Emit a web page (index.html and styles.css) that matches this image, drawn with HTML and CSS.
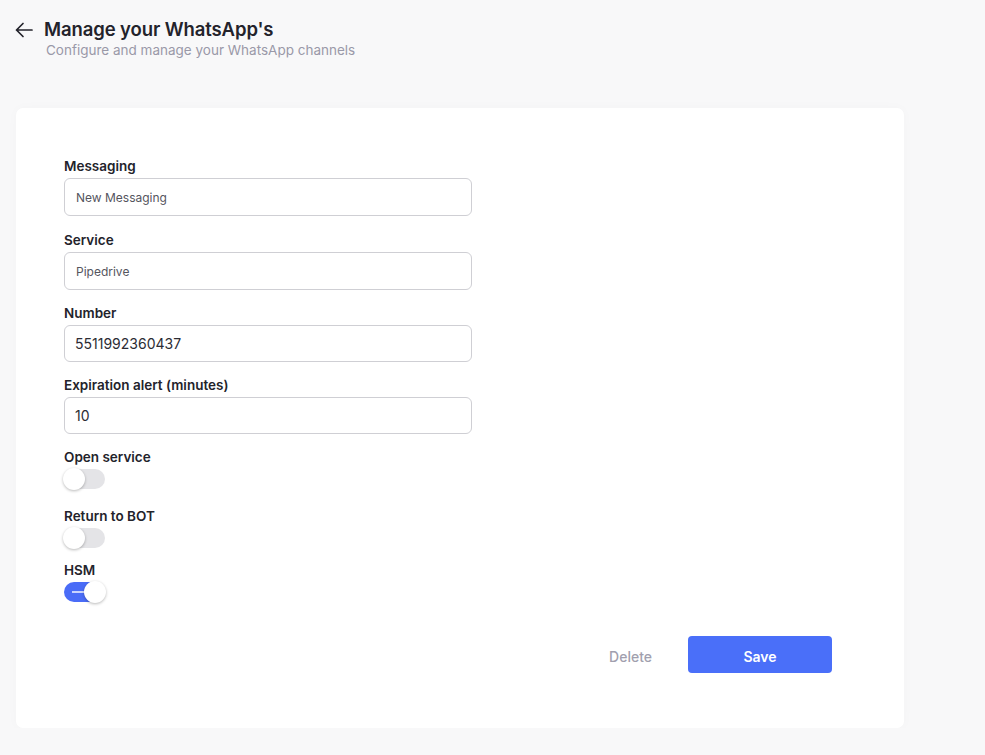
FILE: index.html
```html
<!DOCTYPE html>
<html lang="en">
<head>
<meta charset="utf-8">
<title>Manage your WhatsApp's</title>
<link rel="stylesheet" href="styles.css">
</head>
<body>
<header class="page-header">
  <button class="back-btn" aria-label="Back">
    <svg width="20" height="20" viewBox="0 0 20 20" fill="none" stroke="#23232b" stroke-width="1.7" stroke-linecap="round" stroke-linejoin="round"><path d="M18 10H2.5M9 3.5L2.5 10L9 16.5"/></svg>
  </button>
  <div class="titles">
    <h1 class="title">Manage your WhatsApp's</h1>
    <p class="subtitle">Configure and manage your WhatsApp channels</p>
  </div>
</header>

<main class="card">
  <form class="form">
    <div class="field">
      <label class="label">Messaging</label>
      <input class="input input-muted" type="text" value="New Messaging">
    </div>
    <div class="field tight">
      <label class="label">Service</label>
      <input class="input input-muted" type="text" value="Pipedrive">
    </div>
    <div class="field tight">
      <label class="label">Number</label>
      <input class="input short" type="text" value="5511992360437">
    </div>
    <div class="field">
      <label class="label">Expiration alert (minutes)</label>
      <input class="input short" type="text" value="10">
    </div>
    <div class="switch-field sf-open">
      <span class="label">Open service</span>
      <span class="switch"><span class="knob"></span></span>
    </div>
    <div class="switch-field sf-bot">
      <span class="label">Return to BOT</span>
      <span class="switch"><span class="knob"></span></span>
    </div>
    <div class="switch-field sf-hsm">
      <span class="label">HSM</span>
      <span class="switch on"><span class="bar"></span><span class="knob"></span></span>
    </div>
  </form>
  <div class="actions">
    <button class="btn-delete" type="button">Delete</button>
    <button class="btn-save" type="button">Save</button>
  </div>
</main>
</body>
</html>
```

FILE: styles.css
```css
* { box-sizing: border-box; }

body {
  margin: 0;
  background: #f8f8f9;
  font-family: "Inter", "Lato", sans-serif;
  color: #23232b;
}

.page-header {
  display: flex;
  align-items: flex-start;
  gap: 10px;
  padding: 17px 0 0 14px;
}

.back-btn {
  border: 0;
  background: none;
  padding: 0;
  margin-top: 3px;
  width: 20px;
  height: 20px;
  display: flex;
  cursor: pointer;
}

.title {
  margin: 0;
  font-size: 18.5px;
  font-weight: 600;
  line-height: 24px;
  letter-spacing: -0.1px;
  color: #23232b;
}

.subtitle {
  margin: 0 0 0 2px;
  font-size: 13.5px;
  line-height: 18px;
  color: #9a99a8;
}

.card {
  margin: 49px 0 0 16px;
  width: 888px;
  height: 620px;
  background: #ffffff;
  border-radius: 7px;
  box-shadow: 0 0 12px rgba(0, 0, 0, 0.025);
  padding: 49px 72px 0 48px;
  display: flex;
  flex-direction: column;
}

.form {
  width: 408px;
  display: flex;
  flex-direction: column;
}

.field {
  display: flex;
  flex-direction: column;
  margin-bottom: 15px;
}

.field.tight {
  margin-bottom: 14px;
}

.label {
  font-size: 13.5px;
  font-weight: 600;
  line-height: 18px;
  color: #23232b;
  margin-bottom: 3px;
}

.input {
  height: 38px;
  border: 1px solid #cfcfd4;
  border-radius: 6px;
  padding: 0 11px;
  font-family: inherit;
  font-size: 14px;
  color: #2c2c34;
  background: #fff;
  outline: none;
}

.input.short {
  height: 37px;
  padding-left: 10px;
}

.input-muted {
  font-size: 12px;
  color: #55555e;
}

.switch-field {
  display: flex;
  flex-direction: column;
  align-items: flex-start;
}

.sf-open { margin-top: -1px; }
.sf-bot { margin-top: 18px; }
.sf-hsm { margin-top: 13px; }

.switch {
  position: relative;
  width: 41px;
  height: 20px;
  border-radius: 10px;
  background: #e4e4e7;
}

.switch .knob {
  position: absolute;
  top: -1px;
  left: -1px;
  width: 22px;
  height: 22px;
  border-radius: 50%;
  background: #fff;
  box-shadow: 0 1px 3px rgba(0, 0, 0, 0.28);
}

.switch.on {
  background: #4a6cf7;
}

.switch.on .knob {
  left: 20px;
}

.switch .bar {
  position: absolute;
  left: 8px;
  top: 9px;
  width: 16px;
  height: 1.5px;
  background: rgba(255, 255, 255, 0.7);
}

.actions {
  display: flex;
  justify-content: flex-end;
  align-items: center;
  gap: 16px;
  margin-top: 34px;
}

.btn-delete {
  border: 0;
  background: none;
  font-family: inherit;
  font-size: 14px;
  font-weight: 500;
  color: #a19fae;
  padding: 3px 20px 0;
  height: 37px;
  cursor: pointer;
}

.btn-save {
  width: 144px;
  height: 37px;
  border: 0;
  border-radius: 4px;
  background: #4a6ff9;
  color: #fff;
  font-family: inherit;
  font-size: 14px;
  font-weight: 600;
  padding: 3px 0 0;
  cursor: pointer;
}
```
